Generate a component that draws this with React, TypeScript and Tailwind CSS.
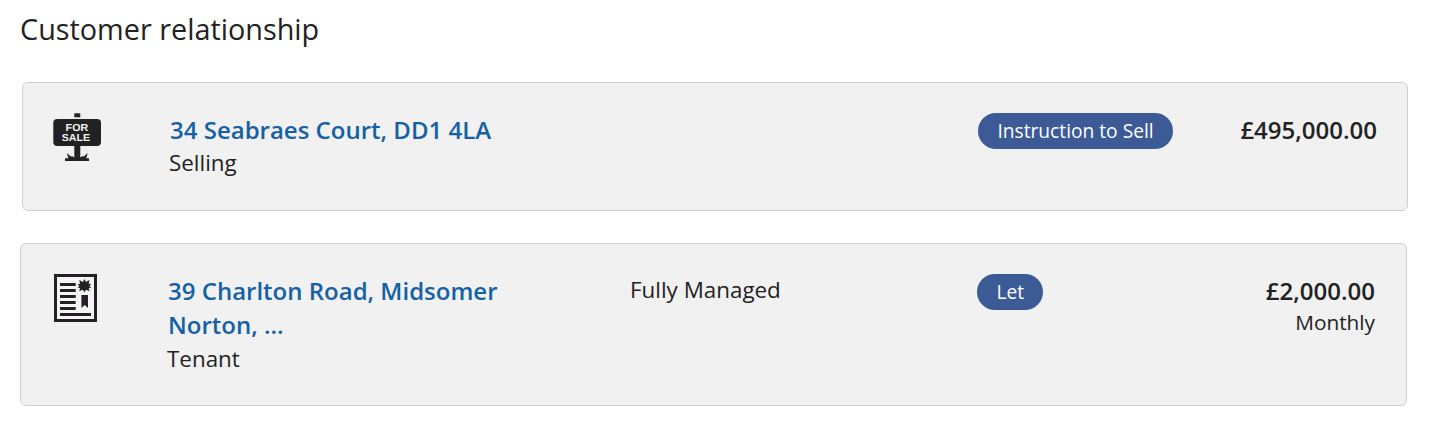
import type { ReactNode } from "react";

function ForSaleIcon() {
  return (
    <svg width="48" height="48" viewBox="0 0 48 48" fill="#222">
      <path d="M21.3 0.3h6v4h-6z" />
      <rect x="0.3" y="6" width="47.7" height="27" rx="4" />
      <path d="M21.3 32h6v12.6l2.9-1.9v1.4l4.6-4-1.6 5.2H36V48H12v-2.7h3.4l-1.6-5.2 4.6 4v-1.4l2.9 1.9z" />
      <g
        fill="#f1f1f1"
        fontFamily="Liberation Sans, Arial, sans-serif"
        fontSize="10.2"
        fontWeight="700"
        textRendering="geometricPrecision"
      >
        <text x="12.6" y="18" textLength="22.6" lengthAdjust="spacingAndGlyphs">FOR</text>
        <text x="8.8" y="28.4" textLength="28.2" lengthAdjust="spacingAndGlyphs">SALE</text>
      </g>
    </svg>
  );
}

function TenancyIcon() {
  return (
    <svg width="43" height="48" viewBox="0 0 43 48" fill="#222">
      <path d="M1.5 1.5h40v45h-40z" fill="#f6f4f7" stroke="#222" strokeWidth="3" />
      <path d="M6 9h15.7v3H6zM6 15h15.7v3H6zM6 21h15.7v3H6zM6 27h15.7v3H6zM6 33h15.7v3H6zM6 39h31v3H6z" />
      <path d="M30.4 5l1.5 3.1 3.7-2-.9 3.6 2.5.4-1.8 1.8 1.8 1.8-2.5.4.9 3.2-3.7-1.5-1.5 2.8-1.5-2.8-3.7 1.5.9-3.2-2.5-.4 1.8-1.8-1.8-1.8 2.5-.4-.9-3.6 3.7 2z" />
      <path d="M27.4 21H34v13l-3.3-3-3.3 3z" />
    </svg>
  );
}

type Relationship = {
  icon: ReactNode;
  address: string;
  role: string;
  service?: string;
  status: string;
  price: string;
  frequency?: string;
  card: string;
};

const relationships: Relationship[] = [
  {
    icon: <ForSaleIcon />,
    address: "34 Seabraes Court, DD1 4LA",
    role: "Selling",
    status: "Instruction to Sell",
    price: "£495,000.00",
    card: "ml-0.5 w-[1386px] h-[129px] pr-[30px] grid-cols-[116px_462px_347px_200px_1fr]",
  },
  {
    icon: <TenancyIcon />,
    address: "39 Charlton Road, Midsomer Norton, ...",
    role: "Tenant",
    service: "Fully Managed",
    status: "Let",
    price: "£2,000.00",
    frequency: "Monthly",
    card: "w-[1387px] h-[163px] pr-[31px] grid-cols-[116px_463px_347px_200px_1fr]",
  },
];

export default function App() {
  return (
    <main className="h-[426px] bg-white px-5 pt-[9px] font-['Open_Sans',sans-serif] text-[#222]">
      <h1 className="text-[28.8px] leading-10">Customer relationship</h1>

      <div className="mt-[33px] flex flex-col gap-8">
        {relationships.map((item) => (
          <article
            key={item.address}
            className={`grid items-start rounded-md border border-[#d0d0d0] bg-[#f1f1f1] pt-[30px] pl-[30px] ${item.card}`}
          >
            <div className="flex w-12 justify-center">{item.icon}</div>
            <div className="w-[350px]">
              <a className="block pl-px text-2xl leading-[34.4px] font-semibold text-[#1561a5]">{item.address}</a>
              <p className="text-[22.4px] leading-[31px]">{item.role}</p>
            </div>
            <p className="text-[22.4px] leading-[31px]">{item.service}</p>
            <span className="h-9 justify-self-start rounded-full bg-[#3b5a96] px-[19.4px] text-[19.2px] leading-9 text-white">
              {item.status}
            </span>
            <div className="text-right">
              <p className="text-2xl leading-[34px] font-semibold">{item.price}</p>
              <p className="text-[20.8px] leading-7">{item.frequency}</p>
            </div>
          </article>
        ))}
      </div>
    </main>
  );
}
